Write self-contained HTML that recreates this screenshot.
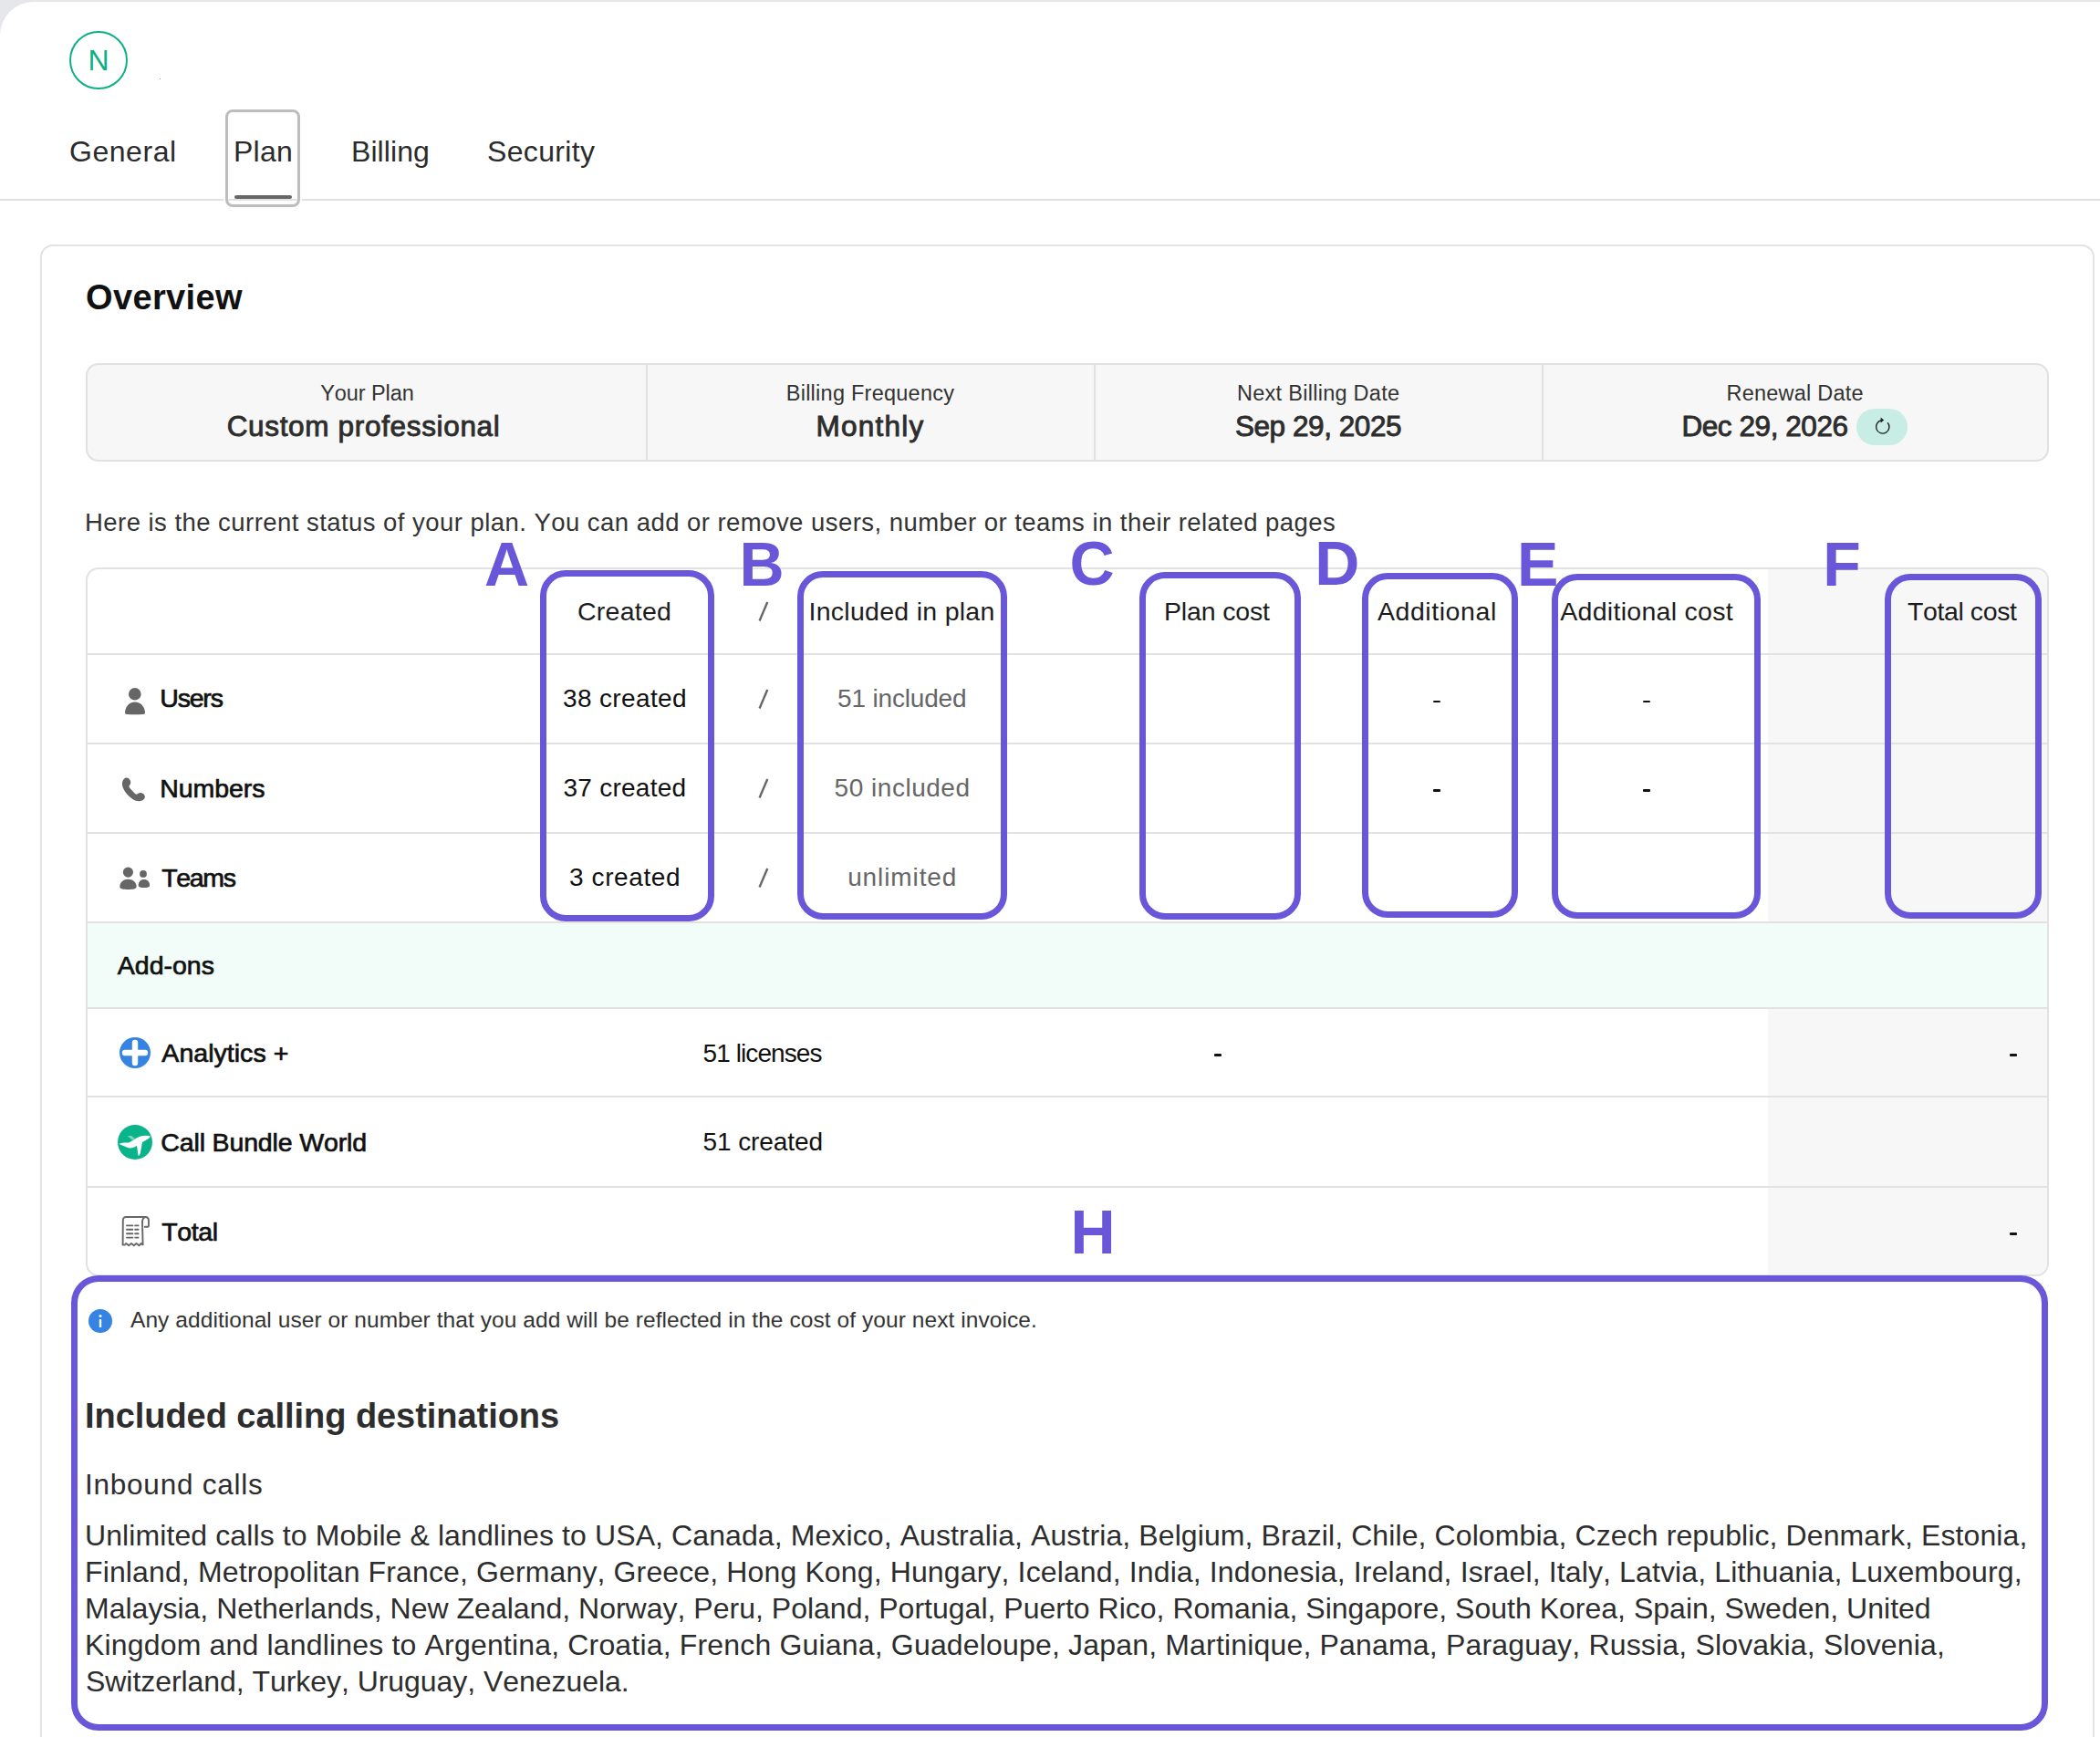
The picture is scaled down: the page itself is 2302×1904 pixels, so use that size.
<!DOCTYPE html>
<html><head><meta charset="utf-8"><title>Plan</title>
<style>
html,body{margin:0;padding:0;}
body{width:2302px;height:1904px;position:relative;overflow:hidden;background:#e6e7ea;font-family:"Liberation Sans",sans-serif;}
.t{position:absolute;white-space:nowrap;font-kerning:none;}
</style></head><body>
<div style="position:absolute;left:0;top:2px;width:2302px;height:1902px;background:#fff;border-top-left-radius:37px;"></div>
<div style="position:absolute;left:76px;top:34px;width:60px;height:60px;border:2px solid #10ae87;border-radius:50%;"></div>
<div class="t" style="left:96.50px;top:49.80px;font-size:32px;line-height:32px;color:#10ae87;">N</div>
<div style="position:absolute;left:175px;top:86px;width:1px;height:1px;background:#999;"></div>
<div class="t" style="left:76.00px;top:149.80px;font-size:32px;line-height:32px;color:#2b2b2b;letter-spacing:0.544px;">General</div>
<div class="t" style="left:256.00px;top:149.80px;font-size:32px;line-height:32px;color:#2b2b2b;letter-spacing:0.250px;">Plan</div>
<div class="t" style="left:385.00px;top:149.80px;font-size:32px;line-height:32px;color:#2b2b2b;letter-spacing:0.070px;">Billing</div>
<div class="t" style="left:534.00px;top:149.80px;font-size:32px;line-height:32px;color:#2b2b2b;letter-spacing:0.344px;">Security</div>
<div style="position:absolute;left:0;top:218px;width:2302px;height:2px;background:#e2e2e2;"></div>
<div style="position:absolute;left:247px;top:120px;width:76px;height:101px;border:3.5px solid #bdbdbd;border-radius:8px;background:transparent;box-shadow:0 0 0 2px #fff;"></div>
<div style="position:absolute;left:257px;top:214px;width:63px;height:4px;background:#666;border-radius:2px;"></div>
<div style="position:absolute;left:44px;top:268px;width:2248px;height:1700px;border:2px solid #e3e3e3;border-radius:14px;"></div>
<div class="t" style="left:94.00px;top:307.20px;font-size:38px;line-height:38px;color:#111;font-weight:bold;letter-spacing:0.366px;">Overview</div>
<div style="position:absolute;left:94px;top:398px;width:2148px;height:104px;background:#f7f7f7;border:2px solid #e1e1e1;border-radius:14px;"></div>
<div style="position:absolute;left:708px;top:400px;width:2px;height:104px;background:#e1e1e1;"></div>
<div style="position:absolute;left:1199px;top:400px;width:2px;height:104px;background:#e1e1e1;"></div>
<div style="position:absolute;left:1690px;top:400px;width:2px;height:104px;background:#e1e1e1;"></div>
<div class="t" style="left:351.25px;top:420.02px;font-size:23.5px;line-height:23.5px;color:#333;letter-spacing:-0.079px;">Your Plan</div>
<div class="t" style="left:248.70px;top:452.23px;font-size:31.5px;line-height:31.5px;color:#2d2d2d;-webkit-text-stroke:0.9px #2d2d2d;letter-spacing:0.665px;">Custom professional</div>
<div class="t" style="left:861.75px;top:420.02px;font-size:23.5px;line-height:23.5px;color:#333;letter-spacing:0.250px;">Billing Frequency</div>
<div class="t" style="left:894.60px;top:452.23px;font-size:31.5px;line-height:31.5px;color:#2d2d2d;-webkit-text-stroke:0.9px #2d2d2d;letter-spacing:1.209px;">Monthly</div>
<div class="t" style="left:1356.00px;top:420.02px;font-size:23.5px;line-height:23.5px;color:#333;letter-spacing:0.272px;">Next Billing Date</div>
<div class="t" style="left:1353.95px;top:452.23px;font-size:31.5px;line-height:31.5px;color:#2d2d2d;-webkit-text-stroke:0.9px #2d2d2d;letter-spacing:-0.436px;">Sep 29, 2025</div>
<div class="t" style="left:1892.50px;top:420.02px;font-size:23.5px;line-height:23.5px;color:#333;letter-spacing:0.224px;">Renewal Date</div>
<div class="t" style="left:1843.45px;top:452.23px;font-size:31.5px;line-height:31.5px;color:#2d2d2d;-webkit-text-stroke:0.9px #2d2d2d;letter-spacing:-0.433px;">Dec 29, 2026</div>
<div style="position:absolute;left:2035px;top:448px;width:56px;height:40px;border-radius:20px;background:#c8ede4;"><svg width="56" height="40" viewBox="0 0 56 40"><path d="M34.2 15.2 A7.2 7.2 0 1 1 27.5 12.8" fill="none" stroke="#222" stroke-width="1.4"/><path d="M26.6 9.6 L30.2 12.6 L26.6 15.6 Z" fill="#222"/></svg></div>
<div class="t" style="left:93.00px;top:559.12px;font-size:27.5px;line-height:27.5px;color:#333;letter-spacing:0.454px;">Here is the current status of your plan. You can add or remove users, number or teams in their related pages</div>
<div style="position:absolute;left:94px;top:622px;width:2148px;height:773px;border:2px solid #e2e2e2;border-radius:14px;overflow:hidden;"><div style="position:absolute;left:1842px;top:0;width:400px;height:800px;background:#f7f7f7;"></div><div style="position:absolute;left:0;top:388px;width:2200px;height:92px;background:#f2fdf9;"></div><div style="position:absolute;left:0;top:92px;width:2200px;height:2px;background:#e2e2e2;"></div><div style="position:absolute;left:0;top:190px;width:2200px;height:2px;background:#e2e2e2;"></div><div style="position:absolute;left:0;top:288px;width:2200px;height:2px;background:#e2e2e2;"></div><div style="position:absolute;left:0;top:386px;width:2200px;height:2px;background:#e2e2e2;"></div><div style="position:absolute;left:0;top:480px;width:2200px;height:2px;background:#e2e2e2;"></div><div style="position:absolute;left:0;top:577px;width:2200px;height:2px;background:#e2e2e2;"></div><div style="position:absolute;left:0;top:676px;width:2200px;height:2px;background:#e2e2e2;"></div></div>
<div class="t" style="left:633.00px;top:655.77px;font-size:28.5px;line-height:28.5px;color:#1c1c1c;letter-spacing:0.243px;">Created</div>
<svg style="position:absolute;left:828px;top:656px" width="18" height="28" viewBox="0 0 18 28"><path d="M5 23.4 L12.8 5.2" stroke="#666" stroke-width="2.4" stroke-linecap="square"/></svg>
<div class="t" style="left:886.50px;top:655.77px;font-size:28.5px;line-height:28.5px;color:#1c1c1c;letter-spacing:0.280px;">Included in plan</div>
<div class="t" style="left:1276.00px;top:655.77px;font-size:28.5px;line-height:28.5px;color:#1c1c1c;letter-spacing:-0.164px;">Plan cost</div>
<div class="t" style="left:1509.90px;top:655.77px;font-size:28.5px;line-height:28.5px;color:#1c1c1c;letter-spacing:0.573px;">Additional</div>
<div class="t" style="left:1710.25px;top:655.77px;font-size:28.5px;line-height:28.5px;color:#1c1c1c;letter-spacing:0.290px;">Additional cost</div>
<div class="t" style="left:2091.00px;top:655.77px;font-size:28.5px;line-height:28.5px;color:#1c1c1c;letter-spacing:-0.403px;">Total cost</div>
<div class="t" style="left:175.35px;top:751.27px;font-size:28.5px;line-height:28.5px;color:#111;-webkit-text-stroke:0.7px #111;letter-spacing:-1.218px;">Users</div>
<div class="t" style="left:617.00px;top:751.70px;font-size:28px;line-height:28px;color:#111;letter-spacing:0.362px;">38 created</div>
<svg style="position:absolute;left:828px;top:751.5px" width="18" height="28" viewBox="0 0 18 28"><path d="M5 23.4 L12.8 5.2" stroke="#666" stroke-width="2.4" stroke-linecap="square"/></svg>
<div class="t" style="left:918.00px;top:751.70px;font-size:28px;line-height:28px;color:#666;letter-spacing:-0.165px;">51 included</div>
<div class="t" style="left:175.35px;top:849.77px;font-size:28.5px;line-height:28.5px;color:#111;-webkit-text-stroke:0.7px #111;letter-spacing:-0.094px;">Numbers</div>
<div class="t" style="left:617.50px;top:850.20px;font-size:28px;line-height:28px;color:#111;letter-spacing:0.251px;">37 created</div>
<svg style="position:absolute;left:828px;top:850px" width="18" height="28" viewBox="0 0 18 28"><path d="M5 23.4 L12.8 5.2" stroke="#666" stroke-width="2.4" stroke-linecap="square"/></svg>
<div class="t" style="left:914.60px;top:850.20px;font-size:28px;line-height:28px;color:#666;letter-spacing:0.515px;">50 included</div>
<div class="t" style="left:177.35px;top:947.77px;font-size:28.5px;line-height:28.5px;color:#111;-webkit-text-stroke:0.7px #111;letter-spacing:-1.388px;">Teams</div>
<div class="t" style="left:624.00px;top:948.20px;font-size:28px;line-height:28px;color:#111;letter-spacing:0.604px;">3 created</div>
<svg style="position:absolute;left:828px;top:948px" width="18" height="28" viewBox="0 0 18 28"><path d="M5 23.4 L12.8 5.2" stroke="#666" stroke-width="2.4" stroke-linecap="square"/></svg>
<div class="t" style="left:929.15px;top:948.20px;font-size:28px;line-height:28px;color:#666;letter-spacing:0.902px;">unlimited</div>
<div style="position:absolute;left:1570.8px;top:767.6px;width:7.8px;height:2.6px;background:#111;border-radius:1px;"></div>
<div style="position:absolute;left:1801px;top:767.6px;width:7.8px;height:2.6px;background:#111;border-radius:1px;"></div>
<div style="position:absolute;left:1570.8px;top:865.4px;width:7.8px;height:2.6px;background:#111;border-radius:1px;"></div>
<div style="position:absolute;left:1801px;top:865.4px;width:7.8px;height:2.6px;background:#111;border-radius:1px;"></div>
<div class="t" style="left:128.85px;top:1043.78px;font-size:28.5px;line-height:28.5px;color:#111;-webkit-text-stroke:0.7px #111;letter-spacing:-0.017px;">Add-ons</div>
<div class="t" style="left:177.35px;top:1140.28px;font-size:28.5px;line-height:28.5px;color:#111;-webkit-text-stroke:0.7px #111;letter-spacing:0.034px;">Analytics +</div>
<div class="t" style="left:770.50px;top:1140.70px;font-size:28px;line-height:28px;color:#111;letter-spacing:-0.908px;">51 licenses</div>
<div style="position:absolute;left:1330.9px;top:1155.3px;width:7.8px;height:2.6px;background:#111;border-radius:1px;"></div>
<div style="position:absolute;left:2203.2px;top:1155.2px;width:7.8px;height:2.6px;background:#111;border-radius:1px;"></div>
<div class="t" style="left:176.35px;top:1237.78px;font-size:28.5px;line-height:28.5px;color:#111;-webkit-text-stroke:0.7px #111;letter-spacing:-0.153px;">Call Bundle World</div>
<div class="t" style="left:770.50px;top:1238.20px;font-size:28px;line-height:28px;color:#111;letter-spacing:-0.083px;">51 created</div>
<div class="t" style="left:177.35px;top:1336.28px;font-size:28.5px;line-height:28.5px;color:#111;-webkit-text-stroke:0.7px #111;letter-spacing:-0.432px;">Total</div>
<div style="position:absolute;left:2203px;top:1351.2px;width:7.8px;height:2.6px;background:#111;border-radius:1px;"></div>
<div style="position:absolute;left:130px;top:748px;width:36px;height:40px;"><svg width="36" height="40" viewBox="0 0 36 40"><circle cx="17.8" cy="12.8" r="6.8" fill="#666"/><path d="M7 33.5 C7 27 11.5 21.4 17.9 21.4 C24.3 21.4 29 27 29 33.5 C29 35 26 35.3 17.9 35.3 C9.8 35.3 7 35 7 33.5 Z" fill="#666"/></svg></div>
<div style="position:absolute;left:127px;top:846px;width:36px;height:40px;"><svg width="36" height="40" viewBox="0 0 36 40"><path d="M8.5 8.2 C10 6 12.8 5.8 14.6 7.8 C16.6 10 16.8 12.6 15.2 14.6 C14.3 15.7 14.2 16.5 15.2 17.8 L20.8 23.8 C22 24.9 22.9 24.9 24 24.1 C26.2 22.4 28.6 22.6 30.6 24.6 C32.4 26.4 32.4 29 30 30.8 C27 33 22.6 32.6 18.4 30 C13.6 26.8 9.6 22 7.6 17 C6.4 13.6 6.8 10.4 8.5 8.2 Z" fill="#666"/></svg></div>
<div style="position:absolute;left:128px;top:944px;width:40px;height:40px;"><svg width="40" height="40" viewBox="0 0 40 40"><circle cx="12.4" cy="12.1" r="5.6" fill="#666"/><path d="M3.3 28 C3.3 23 7.4 19.8 12.45 19.8 C17.5 19.8 21.6 23 21.6 28 C21.6 30.4 17.6 31 12.45 31 C7.3 31 3.3 30.4 3.3 28 Z" fill="#666"/><circle cx="29" cy="13.9" r="3.9" fill="#666"/><path d="M23.7 26.4 C23.7 22.6 26 20 29.9 20 C33.6 20 36.1 22.6 36.1 26.4 C36.1 28.4 33.4 28.9 29.9 28.9 C26.4 28.9 23.7 28.4 23.7 26.4 Z" fill="#666"/></svg></div>
<div style="position:absolute;left:131px;top:1137px;width:34px;height:34px;border-radius:50%;background:#3583e3;"><svg width="34" height="34" viewBox="0 0 34 34"><path d="M17 6 V28 M6 17 H28" stroke="#fff" stroke-width="6.4" stroke-linecap="round"/></svg></div>
<div style="position:absolute;left:129px;top:1233px;width:38px;height:38px;border-radius:50%;background:#0ab48a;overflow:hidden;"><svg width="38" height="38" viewBox="0 0 38 38"><path d="M1.6 20.8 C4 19.6 8 19.4 12.4 19.6 L19 15.5 C23 13 29 10.8 36 12.4 C35.5 14.5 31 16.8 27 19 L25 30 C24.7 33 23.2 34.2 22.5 33.5 L21 22.8 C18 25 15 25.8 12 25.2 C8 24 4.4 22.4 1.6 20.8 Z" fill="#fff"/><path d="M10.8 12.6 L14.6 11.8 L19.2 15 L16 16.6 Z" fill="#fff" opacity="0.45"/></svg></div>
<div style="position:absolute;left:132px;top:1332px;width:36px;height:36px;"><svg width="36" height="36" viewBox="0 0 36 36"><g fill="none" stroke="#666" stroke-width="1.9" stroke-linecap="round" stroke-linejoin="round"><path d="M2.6 32.4 L2.8 5.6 C2.8 3.2 4.2 2 6.2 2 L27 2 C29.5 2 31 3.5 31 6 L31 11.2 C31 12.4 30.4 12.8 29 12.8 L26.8 12.8"/><path d="M27.4 2.2 C25.4 2.8 24 4.6 24 7.6 L24.6 32.4 L22.8 31 L20.4 33.2 L17.6 31 L14.8 33.2 L12 31 L9.2 33.2 L6.4 31 L4.6 32.6 L2.6 32.4"/><path d="M7 11.4 H13.4 M16.2 11.4 H19.6 M7 15.8 H13.4 M16.2 15.8 H19.6 M7 20.2 H13.4 M16.2 20.2 H19.6 M7 24.6 H13.4 M16.2 24.6 H19.6"/></g></svg></div>
<div style="position:absolute;left:592px;top:625px;width:191px;height:385px;box-sizing:border-box;border:7px solid #6a56d8;border-radius:28px;"></div>
<div style="position:absolute;left:874px;top:626px;width:230px;height:382px;box-sizing:border-box;border:7px solid #6a56d8;border-radius:28px;"></div>
<div style="position:absolute;left:1249px;top:627px;width:177px;height:381px;box-sizing:border-box;border:7px solid #6a56d8;border-radius:28px;"></div>
<div style="position:absolute;left:1493px;top:628px;width:171px;height:378px;box-sizing:border-box;border:7px solid #6a56d8;border-radius:28px;"></div>
<div style="position:absolute;left:1701px;top:628.5px;width:228.5px;height:378.5px;box-sizing:border-box;border:7px solid #6a56d8;border-radius:28px;"></div>
<div style="position:absolute;left:2066px;top:628.5px;width:172px;height:378.5px;box-sizing:border-box;border:7px solid #6a56d8;border-radius:28px;"></div>
<div style="position:absolute;left:78px;top:1398px;width:2167px;height:499px;box-sizing:border-box;border:7px solid #6a56d8;border-radius:30px;"></div>
<div class="t" style="left:531.00px;top:584.20px;font-size:68px;line-height:68px;color:#6a56d8;font-weight:bold;">A</div>
<div class="t" style="left:810.50px;top:583.70px;font-size:68px;line-height:68px;color:#6a56d8;font-weight:bold;">B</div>
<div class="t" style="left:1172.50px;top:582.70px;font-size:68px;line-height:68px;color:#6a56d8;font-weight:bold;">C</div>
<div class="t" style="left:1441.30px;top:582.80px;font-size:68px;line-height:68px;color:#6a56d8;font-weight:bold;">D</div>
<div class="t" style="left:1662.90px;top:583.70px;font-size:68px;line-height:68px;color:#6a56d8;font-weight:bold;">E</div>
<div class="t" style="left:1998.30px;top:583.70px;font-size:68px;line-height:68px;color:#6a56d8;font-weight:bold;">F</div>
<div class="t" style="left:1173.60px;top:1315.50px;font-size:68px;line-height:68px;color:#6a56d8;font-weight:bold;">H</div>
<div style="position:absolute;left:97px;top:1435px;width:26px;height:26px;border-radius:50%;background:#3583e3;"><svg width="26" height="26" viewBox="0 0 26 26"><rect x="11.8" y="11" width="2.4" height="9" fill="#fff"/><circle cx="13" cy="7.6" r="1.5" fill="#fff"/></svg></div>
<div class="t" style="left:143.00px;top:1435.17px;font-size:24.5px;line-height:24.5px;color:#333;letter-spacing:0.069px;">Any additional user or number that you add will be reflected in the cost of your next invoice.</div>
<div class="t" style="left:93.00px;top:1533.20px;font-size:38px;line-height:38px;color:#2d2d2d;font-weight:bold;letter-spacing:-0.049px;">Included calling destinations</div>
<div class="t" style="left:93.00px;top:1612.22px;font-size:31.5px;line-height:31.5px;color:#2d2d2d;letter-spacing:0.760px;">Inbound calls</div>
<div class="t" style="left:93.00px;top:1667.30px;font-size:32px;line-height:32px;color:#2d2d2d;letter-spacing:0.099px;">Unlimited calls to Mobile &amp; landlines to USA, Canada, Mexico, Australia, Austria, Belgium, Brazil, Chile, Colombia, Czech republic, Denmark, Estonia,</div>
<div class="t" style="left:93.00px;top:1707.30px;font-size:32px;line-height:32px;color:#2d2d2d;letter-spacing:0.131px;">Finland, Metropolitan France, Germany, Greece, Hong Kong, Hungary, Iceland, India, Indonesia, Ireland, Israel, Italy, Latvia, Lithuania, Luxembourg,</div>
<div class="t" style="left:93.00px;top:1747.30px;font-size:32px;line-height:32px;color:#2d2d2d;letter-spacing:0.009px;">Malaysia, Netherlands, New Zealand, Norway, Peru, Poland, Portugal, Puerto Rico, Romania, Singapore, South Korea, Spain, Sweden, United</div>
<div class="t" style="left:93.00px;top:1787.30px;font-size:32px;line-height:32px;color:#2d2d2d;letter-spacing:0.174px;">Kingdom and landlines to Argentina, Croatia, French Guiana, Guadeloupe, Japan, Martinique, Panama, Paraguay, Russia, Slovakia, Slovenia,</div>
<div class="t" style="left:94.00px;top:1827.30px;font-size:32px;line-height:32px;color:#2d2d2d;letter-spacing:-0.052px;">Switzerland, Turkey, Uruguay, Venezuela.</div>
</body></html>
